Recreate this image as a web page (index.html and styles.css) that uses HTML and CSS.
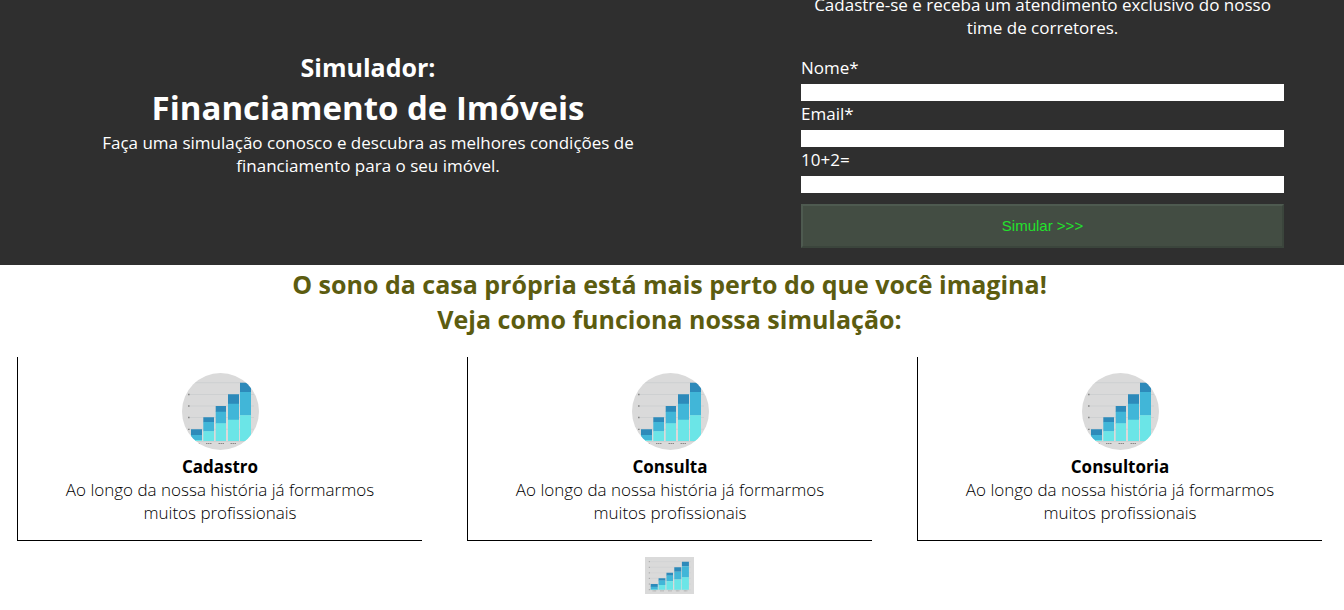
FILE: index.html
```html
<!DOCTYPE html>
<html lang="pt-BR">
<head>
<meta charset="utf-8">
<meta name="viewport" content="width=device-width, initial-scale=1">
<title>Simulador de Financiamento de Imóveis</title>
<link rel="stylesheet" href="styles.css">
</head>
<body>
<svg class="defs" aria-hidden="true">
  <symbol id="chart" viewBox="0 0 77 77" preserveAspectRatio="none">
    <rect width="77" height="77" fill="#dadada"/>
    <path d="M7 9.7H72M7 21.5H72M7 33H72M7 44.5H72M7 56.3H72M7 68.5H72" stroke="#c9cccd" stroke-width=".7"/>
    <path d="M6 9.7h1.6M6 21.5h1.6M6 33h1.6M6 44.5h1.6M6 56.3h1.6M6 68h1.6" stroke="#888" stroke-width="1.3"/>
    <path d="M9 56.3h11v6H9zM21.3 44.3H32v5H21.3zM33.7 33H44v6H33.7zM46 21.3h11v9.6H46zM58 9.7h11V19H58z" fill="#2d8aba"/>
    <path d="M9 62h11v6H9zM21.3 49H32v9.5H21.3zM33.7 38.7H44v12H33.7zM46 30.7h11v16.2H46zM58 19h11v23.5H58z" fill="#41b6d8"/>
    <path d="M9 67h11v1H9zM21.3 58.3H32V68H21.3zM33.7 50.3H44V68H33.7zM46 46.7h11V68H46zM58 42.3h11V68H58z" fill="#6be5e7"/>
    <path d="M12 70.5h5.5M24 70.5h5.5M36.5 70.5h5.5M48.5 70.5h5.5M61 70.5h5.5" stroke="#888" stroke-width="1" stroke-dasharray="1.5 .5"/>
  </symbol>
</svg>
<header class="hero">
  <div class="intro">
    <h2 class="intro-kicker">Simulador:</h2>
    <h1 class="intro-title">Financiamento de Imóveis</h1>
    <p class="intro-text">Faça uma simulação conosco e descubra as melhores condições de financiamento para o seu imóvel.</p>
  </div>
  <form class="form">
    <p class="form-text">Cadastre-se e receba um atendimento exclusivo do nosso time de corretores.</p>
    <label for="nome">Nome*</label>
    <input class="field" id="nome" type="text">
    <label for="email">Email*</label>
    <input class="field" id="email" type="email">
    <label for="soma">10+2=</label>
    <input class="field" id="soma" type="text">
    <button class="submit" type="button">Simular &gt;&gt;&gt;</button>
  </form>
</header>
<main class="steps">
  <h2 class="steps-title">O sono da casa própria está mais perto do que você imagina!<br>Veja como funciona nossa simulação:</h2>
  <div class="cards">
    <article class="card">
      <svg class="card-image" role="img" aria-label="Gráfico"><use href="#chart"/></svg>
      <h3 class="card-title">Cadastro</h3>
      <p class="card-text">Ao longo da nossa história já formarmos muitos profissionais</p>
    </article>
    <article class="card">
      <svg class="card-image" role="img" aria-label="Gráfico"><use href="#chart"/></svg>
      <h3 class="card-title">Consulta</h3>
      <p class="card-text">Ao longo da nossa história já formarmos muitos profissionais</p>
    </article>
    <article class="card">
      <svg class="card-image" role="img" aria-label="Gráfico"><use href="#chart"/></svg>
      <h3 class="card-title">Consultoria</h3>
      <p class="card-text">Ao longo da nossa história já formarmos muitos profissionais</p>
    </article>
  </div>
  <svg class="thumb" role="img" aria-label="Gráfico"><use href="#chart"/></svg>
</main>
</body>
</html>
```
FILE: styles.css
```css
* {
  box-sizing: border-box;
}

body {
  margin: 0;
  background: #fff;
  color: #000;
  font: 17px/23px "Segoe UI", "Open Sans", "Noto Sans", sans-serif;
}

h1, h2, h3, p {
  margin: 0;
}

.defs {
  position: absolute;
  width: 0;
  height: 0;
}

.hero {
  display: grid;
  grid-template-columns: 616fr 483fr;
  column-gap: 125px;
  margin-top: -7px;
  padding: 0 60px 17px;
  background: #2f2f2f;
  color: #fff;
}

.intro {
  padding: 57px 40px 0;
  text-align: center;
}

.intro-kicker {
  font-size: 25px;
  line-height: 35px;
}

.intro-title {
  font-size: 33px;
  line-height: 46px;
}

.form {
  display: flex;
  flex-direction: column;
}

.form-text {
  margin-bottom: 17px;
  padding: 0 8px;
  text-align: center;
}

.field {
  width: 100%;
  height: 17px;
  margin: 5px 0 1px;
  padding: 0 4px;
  border: 0;
  background: #fff;
}

.submit {
  height: 44px;
  margin-top: 10px;
  padding: 0 6px 2px;
  border: 2px solid;
  border-color: #4e5a50 #3b453c #3b453c #4e5a50;
  background: #434d43;
  color: #22e32c;
  font: 15px "Liberation Sans", Arial, sans-serif;
}

.steps {
  padding: 2px 22px 16px 17px;
  text-align: center;
}

.steps-title {
  margin-bottom: 20px;
  color: #5c5c10;
  font-size: 25px;
  line-height: 35px;
}

.cards {
  display: grid;
  grid-template-columns: repeat(3, 1fr);
  column-gap: 45px;
}

.card {
  padding: 16px 36px;
  border-bottom: 1px solid #000;
  border-left: 1px solid #000;
}

.card-image {
  display: block;
  width: 77px;
  height: 77px;
  margin: 0 auto 5px;
  border-radius: 50%;
}

.card-title {
  font-size: 17px;
  line-height: 23px;
}

.card-text {
  font-weight: 300;
}

.thumb {
  display: block;
  width: 49px;
  height: 37px;
  margin: 16px auto 0;
}
```
